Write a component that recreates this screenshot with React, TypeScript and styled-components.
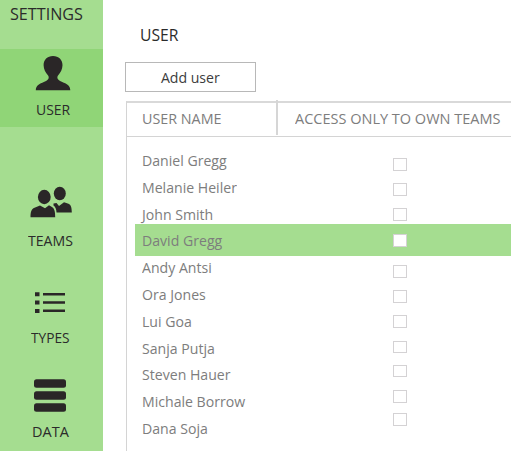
import React from "react";
import styled, { createGlobalStyle } from "styled-components";

const Global = createGlobalStyle`
  * { box-sizing: border-box; }
  body { margin: 0; background: #fff; overflow: hidden; }
`;

const Page = styled.div`
  display: flex;
  width: 511px;
  height: 451px;
  overflow: hidden;
  font-family: "Open Sans", "Noto Sans", sans-serif;
  font-size: 15px;
  color: #2b2b2b;
  white-space: nowrap;
`;

/* Slightly condensed text run. */
const Text = styled.span<{ $scale?: number; $size?: number; $centered?: boolean }>`
  display: inline-block;
  font-size: ${(p) => p.$size ?? 15}px;
  transform: scaleX(${(p) => p.$scale ?? 0.94});
  transform-origin: ${(p) => (p.$centered ? "center" : "left")};
`;

const Sidebar = styled.nav`
  flex: 0 0 103px;
  height: 451px;
  background: #a5dd90;
`;

const SidebarTitle = styled.div`
  height: 49px;
  padding-left: 9.5px;
  line-height: 28px;
`;

const NavItem = styled.div<{ $height: number; $active?: boolean }>`
  height: ${(p) => p.$height}px;
  margin-bottom: ${(p) => (p.$active ? 51 : 0)}px;
  background: ${(p) => (p.$active ? "#90d577" : "transparent")};
`;

const NavIcon = styled.svg`
  display: block;
  width: 103px;
  height: 50px;
  fill: #2a2627;
`;

const NavLabel = styled.div<{ $indent: number; $gap?: number }>`
  margin-top: ${(p) => p.$gap ?? 0}px;
  line-height: 22px;
  padding-left: ${(p) => p.$indent}px;
`;

const Main = styled.main`
  flex: 1;
  min-width: 0;
`;

const Heading = styled.h1`
  margin: 0;
  height: 62px;
  padding: 24px 0 0 37px;
  font-size: 16px;
  font-weight: 400;
  line-height: 22px;
`;

const AddButton = styled.button`
  display: block;
  width: 131px;
  height: 30px;
  margin: 0 0 9px 22px;
  padding: 0 0 1px;
  border: 1px solid #b8b8b8;
  background: #fff;
  color: #3c3c3c;
  font: inherit;
  line-height: 26px;
`;

const Table = styled.section`
  height: 350px;
  margin-left: 23px;
  border-top: 2px solid #d9d9d9;
  border-left: 1px solid #d4d4d4;
  color: #7d7d7d;
`;

const HeaderRow = styled.div`
  display: grid;
  grid-template-columns: 151px 1fr;
  height: 34px;
  border-bottom: 1px solid #d4d4d4;
  line-height: 31px;
`;

const HeaderCell = styled.div<{ $indent: number; $divided?: boolean }>`
  margin: -3px 0 1px;
  padding-top: 3px;
  padding-left: ${(p) => p.$indent}px;
  border-right: ${(p) => (p.$divided ? "2px solid #d6d6d6" : "none")};
`;

const Rows = styled.div`
  padding: 7px 0 0 8px;
`;

const Row = styled.div<{ $pitch: number; $selected?: boolean }>`
  display: grid;
  grid-template-columns: 258px 14px;
  height: 32px;
  margin-bottom: ${(p) => p.$pitch - 32}px;
  background: ${(p) => (p.$selected ? "#a5dd90" : "transparent")};
  line-height: 32px;
`;

const Name = styled.div`
  padding-left: 6.5px;
`;

const Checkbox = styled.div<{ $top: number; $height?: number }>`
  width: 14px;
  height: ${(p) => p.$height ?? 13}px;
  margin-top: ${(p) => p.$top}px;
  border: 1px solid #d4d2d4;
  background: #fff;
`;

type User = { name: string; pitch: number; check: number; size?: number; selected?: boolean };

const users: User[] = [
  { name: "Daniel Gregg", pitch: 27, check: 14 },
  { name: "Melanie Heiler", pitch: 27, check: 12 },
  { name: "John Smith", pitch: 26, check: 10 },
  { name: "David Gregg", pitch: 27, check: 10, selected: true },
  { name: "Andy Antsi", pitch: 27, check: 14 },
  { name: "Ora Jones", pitch: 27, check: 12 },
  { name: "Lui Goa", pitch: 27, check: 10 },
  { name: "Sanja Putja", pitch: 26, check: 9, size: 12 },
  { name: "Steven Hauer", pitch: 27, check: 7, size: 12 },
  { name: "Michale Borrow", pitch: 27, check: 5 },
  { name: "Dana Soja", pitch: 27, check: 1 },
];

export default function App() {
  return (
    <>
      <Global />
      <Page>
        <Sidebar>
          <SidebarTitle><Text $size={16} $scale={1.01}>SETTINGS</Text></SidebarTitle>
          <NavItem $height={78} $active>
            <NavIcon viewBox="0 49 103 50">
              <path d="M53 56c5.700 0 9.600 3.800 9.500 9.300-.1 4-1.800 7.200-4.300 10-.8 1-1.200 2.500-.4 3.700 1 1.600 3 2.500 6 3.700 4 1.600 6.300 3.500 6.500 7.500H35.800c.2-4 2.500-5.900 6.500-7.500 3-1.200 5-2.100 6-3.700.8-1.200.4-2.700-.4-3.700-2.500-2.800-4.200-6-4.300-10-.1-5.500 3.700-9.300 9.400-9.300z" />
            </NavIcon>
            <NavLabel $indent={35.5} $gap={-1}><Text $scale={0.93}>USER</Text></NavLabel>
          </NavItem>
          <NavItem $height={95}>
            <NavIcon viewBox="0 178 103 50">
              <ellipse cx="59.800" cy="193.500" rx="6" ry="6.700" />
              <path d="M53.500 203.500l3-.5 2.500 3 5-3.800 4.500 1.600c2.300 1 3.200 3.200 3.300 8.600H56.500c-.2-3-.8-5.500-3-7z" />
              <ellipse cx="44.300" cy="197" rx="6.400" ry="7.200" />
              <path d="M30.500 217.200c0-5 .8-8.100 4-9.400l5.500-2.400 5 2.800 4-3 3 1.800c2.700 1.700 3.200 5.200 3.200 10.200z" />
            </NavIcon>
            <NavLabel $indent={28} $gap={1}><Text>TEAMS</Text></NavLabel>
          </NavItem>
          <NavItem $height={94}>
            <NavIcon viewBox="0 273 103 50">
              <path d="M35 292.300h4.500v4H35zM35 300.500h4.500v4H35zM35 309h4.500v4H35zM43 293h22v2.500H43zM43 301.300h22v2.500H43zM43 309.500h22v2.500H43z" />
            </NavIcon>
            <NavLabel $indent={31} $gap={3}><Text $scale={0.915}>TYPES</Text></NavLabel>
          </NavItem>
          <NavItem $height={78}>
            <NavIcon viewBox="0 367 103 50">
              <rect x="34" y="379.300" width="32" height="8.500" rx="2.500" />
              <rect x="34" y="391.300" width="32" height="8.500" rx="2.500" />
              <rect x="34" y="403.300" width="32" height="8.500" rx="2.500" />
            </NavIcon>
            <NavLabel $indent={32} $gap={3}><Text $scale={0.965}>DATA</Text></NavLabel>
          </NavItem>
        </Sidebar>
        <Main>
          <Heading><Text $size={16} $scale={0.98}>USER</Text></Heading>
          <AddButton><Text $centered>Add user</Text></AddButton>
          <Table>
            <HeaderRow>
              <HeaderCell $indent={14.5} $divided><Text $scale={0.955}>USER NAME</Text></HeaderCell>
              <HeaderCell $indent={17}><Text $scale={0.967}>ACCESS ONLY TO OWN TEAMS</Text></HeaderCell>
            </HeaderRow>
            <Rows>
              {users.map((u) => (
                <Row key={u.name} $pitch={u.pitch} $selected={u.selected}>
                  <Name><Text>{u.name}</Text></Name>
                  <Checkbox $top={u.check} $height={u.size} />
                </Row>
              ))}
            </Rows>
          </Table>
        </Main>
      </Page>
    </>
  );
}
